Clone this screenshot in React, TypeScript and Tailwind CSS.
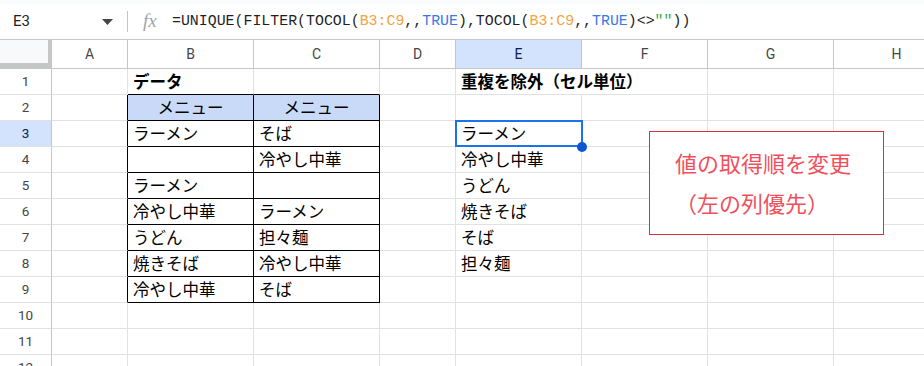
const colWidths = [76, 126, 126, 76, 126, 126, 126, 126];
const colNames = ['A', 'B', 'C', 'D', 'E', 'F', 'G', 'H'];

type CellData = { text?: string; bold?: boolean; center?: boolean; bg?: string; spill?: boolean };

// rows 1..12, cols A..H
const data: Record<number, Record<number, CellData>> = {
  1: { 1: { text: 'データ', bold: true }, 4: { text: '重複を除外（セル単位）', bold: true, spill: true } },
  2: { 1: { text: 'メニュー', center: true, bg: 'bg-[#c9daf8]' }, 2: { text: 'メニュー', center: true, bg: 'bg-[#c9daf8]' } },
  3: { 1: { text: 'ラーメン' }, 2: { text: 'そば' }, 4: { text: 'ラーメン' } },
  4: { 2: { text: '冷やし中華' }, 4: { text: '冷やし中華' } },
  5: { 1: { text: 'ラーメン' }, 4: { text: 'うどん' } },
  6: { 1: { text: '冷やし中華' }, 2: { text: 'ラーメン' }, 4: { text: '焼きそば' } },
  7: { 1: { text: 'うどん' }, 2: { text: '担々麺' }, 4: { text: 'そば' } },
  8: { 1: { text: '焼きそば' }, 2: { text: '冷やし中華' }, 4: { text: '担々麺' } },
  9: { 1: { text: '冷やし中華' }, 2: { text: 'そば' } },
};

const rows = Array.from({ length: 12 }, (_, i) => i + 1);

function inTable(r: number) {
  return r >= 2 && r <= 9;
}

function FormulaBar() {
  return (
    <div className="h-[40px] bg-white border-b border-[#c4c7c5] relative">
      <div className="h-[4px] bg-[#f9fbfd]" />
      <div className="flex items-center h-[35px]">
        <div className="w-[127px] flex items-center pl-[13px] pr-[14px] justify-between">
          <span className="text-[15px] text-[#1f1f1f]" style={{ fontFamily: 'Roboto, sans-serif' }}>E3</span>
          <svg width="11" height="6" viewBox="0 0 11 6">
            <path d="M0 0 L11 0 L5.5 6 Z" fill="#444746" />
          </svg>
        </div>
        <div className="w-px h-[21px] bg-[#c4c7c5]" />
        <span
          className="ml-[15px] text-[19px] italic text-[#a0a4a8] w-[22px]"
          style={{ fontFamily: '"Liberation Serif", serif' }}
        >
          fx
        </span>
        <span
          className="ml-[7px] text-[14.9px] text-[#1f1f1f] whitespace-pre"
          style={{ fontFamily: '"Liberation Mono", monospace' }}
        >
          =UNIQUE(FILTER(TOCOL(<span className="text-[#f6a23c]">B3:C9</span>,,<span className="text-[#3b78e7]">TRUE</span>),TOCOL(<span className="text-[#f6a23c]">B3:C9</span>,,<span className="text-[#3b78e7]">TRUE</span>)&lt;&gt;<span className="text-[#34a853]">""</span>))
        </span>
      </div>
    </div>
  );
}

function HeaderRow() {
  return (
    <div className="flex h-[29px] border-b border-[#c4c7c5]" style={{ fontFamily: 'Roboto, sans-serif' }}>
      <div className="w-[52px] shrink-0 flex">
        <div className="flex-1 flex flex-col">
          <div className="flex-1 bg-[#f8f9fa]" />
          <div className="h-[5px] bg-[#c4c7c5]" />
        </div>
        <div className="w-[4px] bg-[#c4c7c5]" />
      </div>
      {colNames.map((c, i) => (
        <div
          key={c}
          className={`shrink-0 flex items-center justify-center text-[14px] border-r border-[#c4c7c5] ${
            c === 'E' ? 'bg-[#d3e3fd] text-[#0b1d4f]' : 'bg-white text-[#444746]'
          }`}
          style={{ width: colWidths[i] }}
        >
          {c}
        </div>
      ))}
    </div>
  );
}

function Cell({ r, c }: { r: number; c: number }) {
  const d = data[r]?.[c] ?? {};
  const blackRight = inTable(r) && c >= 0 && c <= 2;
  const blackBottom = c >= 1 && c <= 2 && r >= 1 && r <= 9;
  const rightColor = blackRight ? 'border-r-black' : d.spill ? 'border-r-white' : 'border-r-[#e1e1e1]';
  return (
    <div
      className={`shrink-0 h-[26px] border-r border-b flex items-center whitespace-nowrap text-[16.5px] text-black ${rightColor} ${
        blackBottom ? 'border-b-black' : 'border-b-[#e1e1e1]'
      } ${d.bg ?? 'bg-white'} ${d.center ? 'justify-center' : 'pl-[5px]'} ${d.bold ? 'font-bold' : ''} ${
        d.spill ? 'overflow-visible' : 'overflow-hidden'
      }`}
      style={{ width: colWidths[c], fontFamily: '"Liberation Sans", "Noto Sans CJK JP", sans-serif' }}
    >
      <span className="pt-[2px] relative z-10">{d.text}</span>
    </div>
  );
}

export default function App() {
  return (
    <div className="w-[924px] h-[366px] overflow-hidden bg-white relative">
      <FormulaBar />
      <HeaderRow />
      <div className="relative">
        {rows.map((r) => (
          <div key={r} className="flex">
            <div
              className={`w-[52px] shrink-0 h-[26px] flex items-center justify-center text-[13.5px] border-r border-r-[#c4c7c5] border-b border-b-[#e1e1e1] ${
                r === 3 ? 'bg-[#d3e3fd] text-[#0b1d4f]' : 'bg-white text-[#444746]'
              }`}
              style={{ fontFamily: 'Roboto, sans-serif' }}
            >
              {r}
            </div>
            {colNames.map((_, c) => (
              <Cell key={c} r={r} c={c} />
            ))}
          </div>
        ))}

        {/* selection on E3 */}
        <div className="absolute z-20 left-[455px] top-[51px] w-[128px] h-[27px] border-2 border-[#1a73e8] pointer-events-none" />
        <div className="absolute z-20 left-[577px] top-[73px] w-[10px] h-[10px] rounded-full bg-[#0b57d0]" />

        {/* note box */}
        <div
          className="absolute z-20 left-[649px] top-[62px] w-[235px] h-[104px] bg-white border border-[#d9303c] pl-[25px] pt-[10px] text-[22px] leading-[40px] text-[#f0505c]"
          style={{ fontFamily: '"Noto Sans CJK JP", sans-serif' }}
        >
          <div>値の取得順を変更</div>
          <div>（左の列優先）</div>
        </div>
      </div>
    </div>
  );
}
